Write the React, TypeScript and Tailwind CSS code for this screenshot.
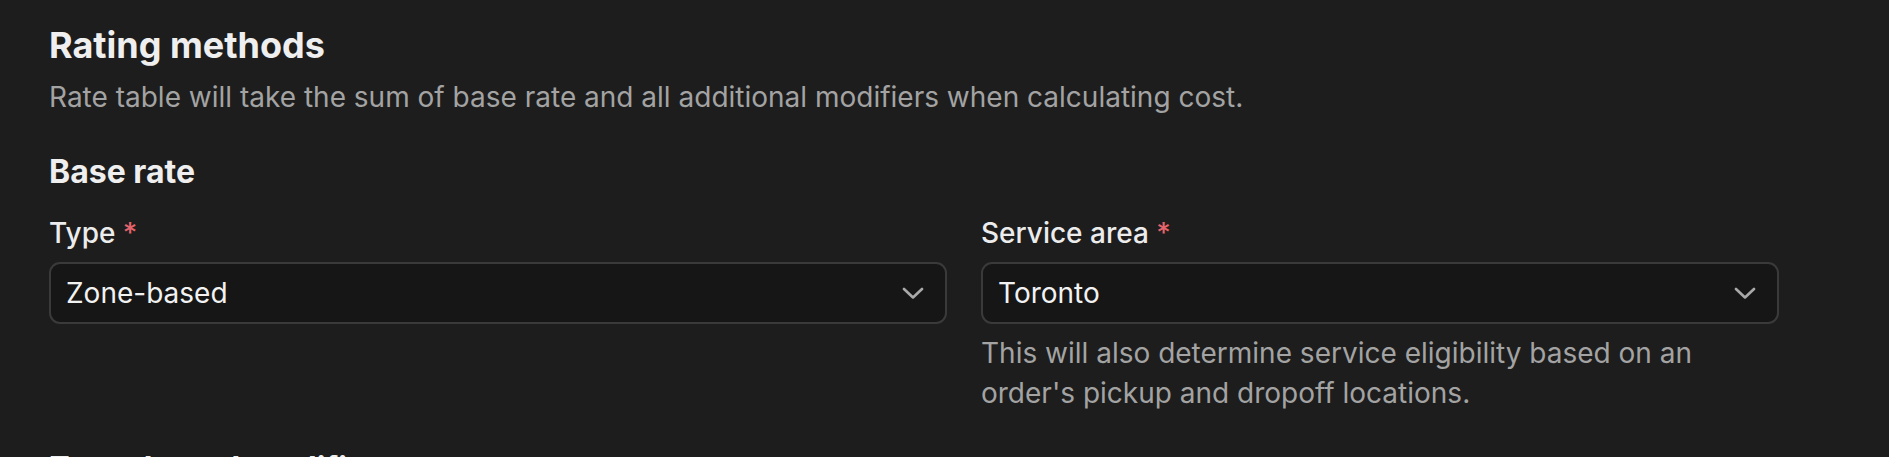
type SelectFieldProps = {
  label: string;
  value: string;
  help?: string;
  width: string;
};

const Chevron = () => (
  <svg width="22" height="12" viewBox="0 0 22 12" fill="none" className="text-[#a9a9a9]">
    <path d="M2 2L11 10.5L20 2" stroke="currentColor" strokeWidth="2.6" strokeLinecap="round" strokeLinejoin="round" />
  </svg>
);

const SelectField = ({ label, value, help, width }: SelectFieldProps) => (
  <div className={`flex flex-col ${width}`}>
    <label className="text-[28px] leading-[40px] font-medium text-[#ececec]">
      {label} <span className="text-[#e5646c]">*</span>
    </label>
    <button className="mt-[9px] h-[62px] flex items-center justify-between pl-[15px] pr-[21px] rounded-[11px] border-2 border-[#3a3a3a] bg-[#161616] text-left">
      <span className="text-[28px] leading-[40px] text-[#f2f2f2]">{value}</span>
      <Chevron />
    </button>
    {help && (
      <p className="mt-[9px] text-[28px] leading-[40px] text-[#a3a3a3]">{help}</p>
    )}
  </div>
);

export default function App() {
  return (
    <div
      className="min-h-screen bg-[#1d1d1d] pl-[49px] pt-[23px]"
      style={{ fontFamily: "Inter, 'Noto Sans', sans-serif" }}
    >
      <section>
        <h1 className="text-[36px] leading-[44px] font-bold text-[#efefef]">
          Rating methods
        </h1>
        <p className="mt-[10px] text-[28px] leading-[40px] text-[#a3a3a3]">
          Rate table will take the sum of base rate and all additional modifiers when calculating cost.
        </p>
      </section>

      <section className="mt-[35px]">
        <h2 className="text-[32px] leading-[40px] font-bold text-[#efefef]">Base rate</h2>
        <div className="mt-[21px] flex items-start gap-[34px]">
          <SelectField label="Type" value="Zone-based" width="w-[898px]" />
          <SelectField
            label="Service area"
            value="Toronto"
            width="w-[798px]"
            help="This will also determine service eligibility based on an order's pickup and dropoff locations."
          />
        </div>
      </section>

      <section className="mt-[36px]">
        <h2 className="text-[32px] leading-[40px] font-bold text-[#efefef]">
          Zone-based modifiers
        </h2>
      </section>
    </div>
  );
}
